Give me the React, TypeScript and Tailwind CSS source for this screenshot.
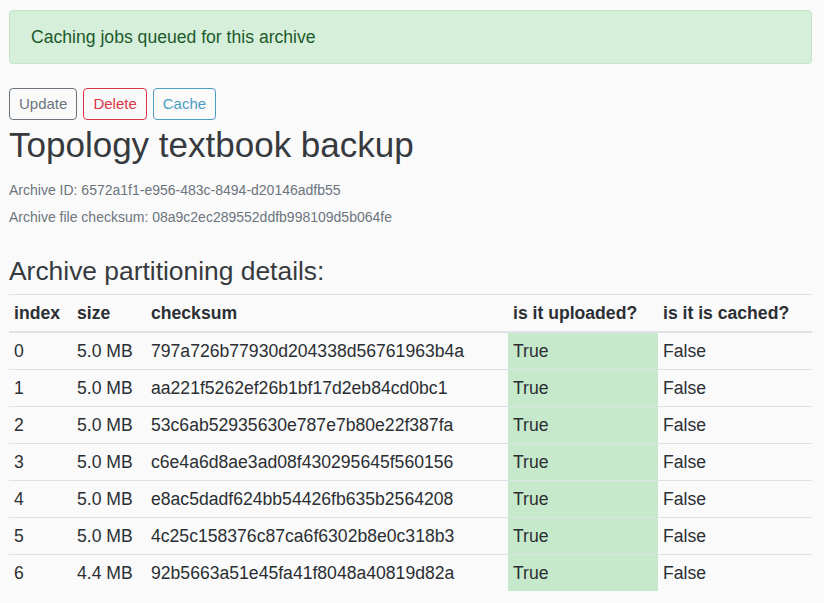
import React from 'react';

const parts = [
  { index: 0, size: '5.0 MB', checksum: '797a726b77930d204338d56761963b4a' },
  { index: 1, size: '5.0 MB', checksum: 'aa221f5262ef26b1bf17d2eb84cd0bc1' },
  { index: 2, size: '5.0 MB', checksum: '53c6ab52935630e787e7b80e22f387fa' },
  { index: 3, size: '5.0 MB', checksum: 'c6e4a6d8ae3ad08f430295645f560156' },
  { index: 4, size: '5.0 MB', checksum: 'e8ac5dadf624bb54426fb635b2564208' },
  { index: 5, size: '5.0 MB', checksum: '4c25c158376c87ca6f6302b8e0c318b3' },
  { index: 6, size: '4.4 MB', checksum: '92b5663a51e45fa41f8048a40819d82a' },
];

export default function App() {
  return (
    <div className="min-h-screen bg-[#fafafa] pl-[9px] pr-[12px] pt-[10px] text-[#2b2f33] text-[17.6px] leading-[26px] font-['Liberation_Sans',Arial,sans-serif]">
      {/* Alert */}
      <div className="rounded-[4px] border border-[#c3e6cb] bg-[#d6efdb] px-[21px] py-[13px] text-[#1d5a2a]">
        Caching jobs queued for this archive
      </div>

      {/* Actions */}
      <div className="mt-[24px] flex gap-[6px] text-[15px] leading-[22px]">
        <button className="rounded-[4px] border border-[#6c757d] px-[9px] py-[4px] text-[#6c757d]">Update</button>
        <button className="rounded-[4px] border border-[#dc3545] px-[9px] py-[4px] text-[#dc3545]">Delete</button>
        <button className="rounded-[4px] border border-[#4b9dc4] px-[9px] py-[4px] text-[#4b9dc4]">Cache</button>
      </div>

      <h1 className="mt-[4px] text-[35px] leading-[42px] text-[#363a3e]">Topology textbook backup</h1>

      <div className="mt-[14px] flex flex-col gap-[6px] text-[14px] leading-[21px] text-[#6c757d]">
        <p>Archive ID: 6572a1f1-e956-483c-8494-d20146adfb55</p>
        <p>Archive file checksum: 08a9c2ec289552ddfb998109d5b064fe</p>
      </div>

      <h2 className="mt-[27px] text-[26.4px] leading-[32px] text-[#363a3e]">Archive partitioning details:</h2>

      {/* Partitions */}
      <table className="mt-[7px] w-full table-fixed border-collapse text-left">
        <colgroup>
          <col className="w-[63px]" />
          <col className="w-[74px]" />
          <col className="w-[362px]" />
          <col className="w-[150px]" />
          <col />
        </colgroup>
        <thead>
          <tr>
            {['index', 'size', 'checksum', 'is it uploaded?', 'is it is cached?'].map((h) => (
              <th key={h} className="border-t border-b-2 border-[#dee2e6] px-[5px] py-[5px] font-bold whitespace-nowrap">
                {h}
              </th>
            ))}
          </tr>
        </thead>
        <tbody>
          {parts.map((p) => (
            <tr key={p.index}>
              <td className="border-t border-[#dee2e6] px-[5px] py-[5px]">{p.index}</td>
              <td className="border-t border-[#dee2e6] px-[5px] py-[5px] whitespace-nowrap">{p.size}</td>
              <td className="border-t border-[#dee2e6] px-[5px] py-[5px]">{p.checksum}</td>
              <td className="border-t border-[#dee2e6] bg-[#c6e9cc] px-[5px] py-[5px]">True</td>
              <td className="border-t border-[#dee2e6] px-[5px] py-[5px]">False</td>
            </tr>
          ))}
        </tbody>
      </table>
    </div>
  );
}
